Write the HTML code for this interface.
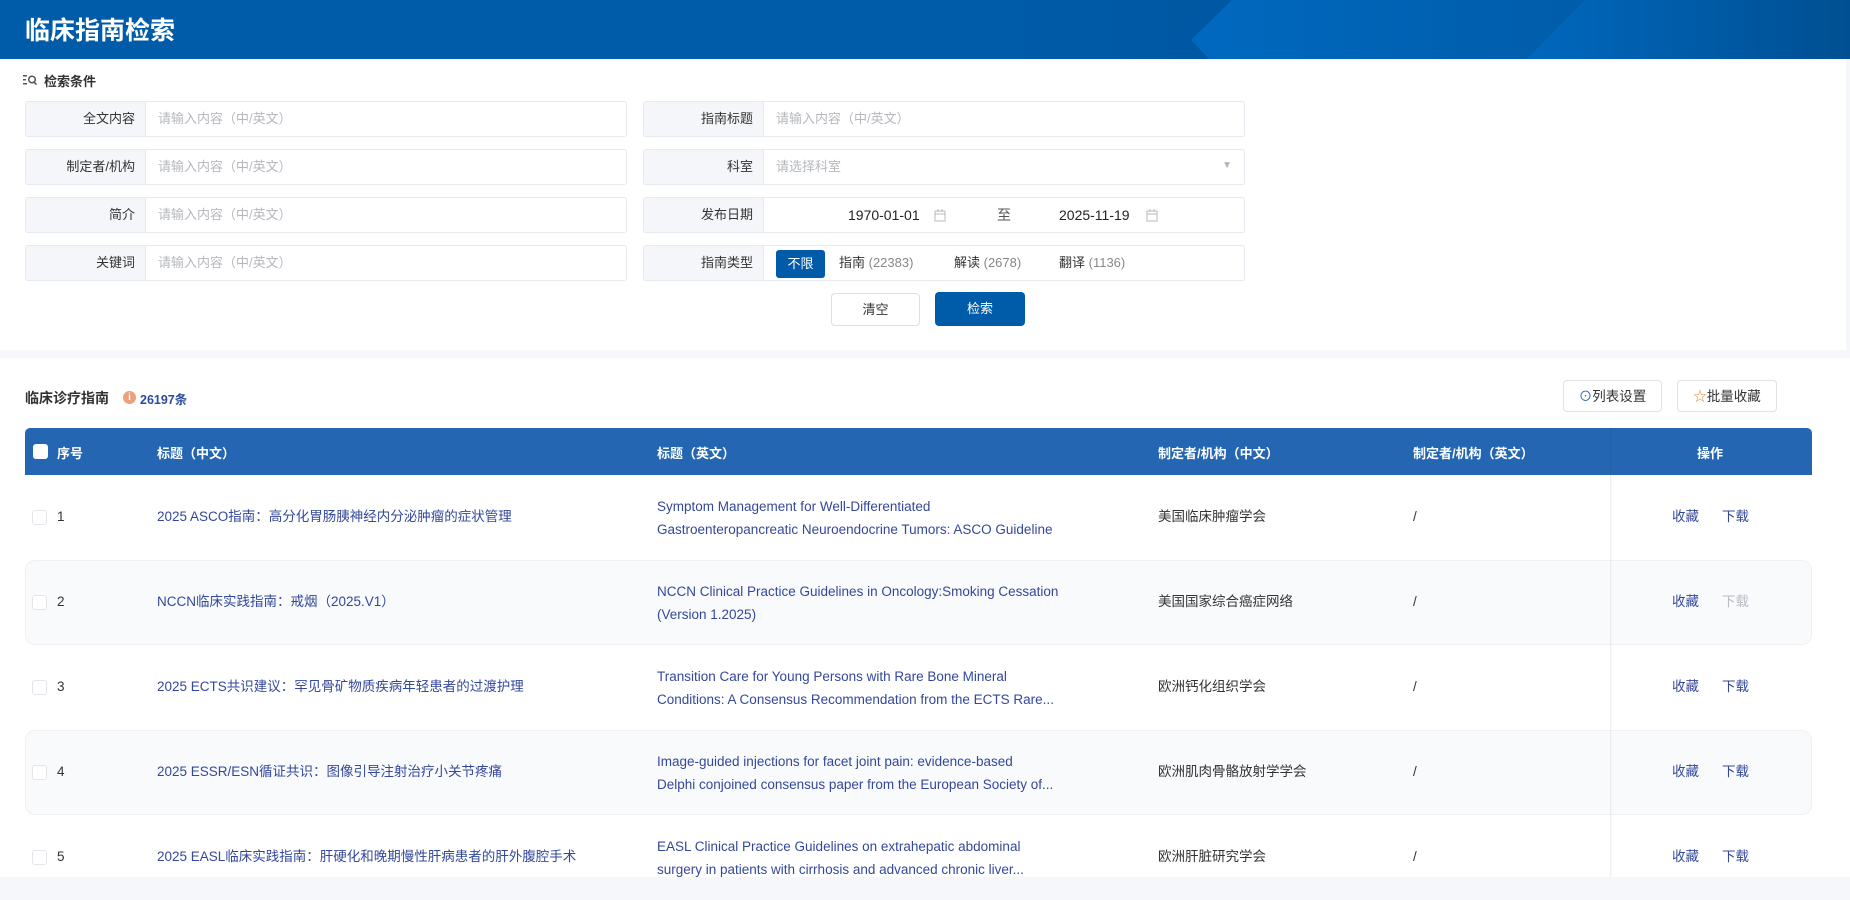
<!DOCTYPE html>
<html><head><meta charset="utf-8"><style>
*{box-sizing:border-box;margin:0;padding:0}
body{width:1850px;height:877px;overflow:hidden;background:#f5f7fb;font-family:"Liberation Sans","Noto Sans CJK SC",sans-serif;font-size:14px;color:#333;position:relative}
.hdr{position:absolute;left:0;top:0;width:1850px;height:59px;background:#005ba8;overflow:hidden}
.hdr h1{position:absolute;left:25px;top:11px;color:#fff;font-size:25px;font-weight:bold;z-index:2}
.panel{position:absolute;left:0;top:59px;width:1846px;height:291px;background:#fff}
.abs{position:absolute}
.box{position:absolute;height:36px;border:1px solid #e6e9ef;border-radius:3px;background:#fff}
.box .lab{position:absolute;left:0;top:0;bottom:0;width:120px;background:#f4f6f9;border-right:1px solid #e6e9ef;text-align:right;padding-right:10px;line-height:34px;color:#333;font-size:13px}
.box .ph{position:absolute;left:132px;line-height:34px;color:#b5b8be;font-size:13px}
.btn{position:absolute;height:33px;border-radius:4px;text-align:center;line-height:31px;font-size:13px}
.sec{position:absolute;left:0;top:358px;width:1850px;height:519px;background:#fff}
.th{position:absolute;left:25px;top:428px;width:1787px;height:47px;background:#2466b1;border-radius:5px 5px 0 0;color:#fff;font-weight:bold;font-size:13px}
.th span{position:absolute;top:15px}
.row{position:absolute;left:25px;width:1787px;height:85px;font-size:13.5px}
.row.g{background:#f9fafc;border:1px solid #eff1f4;border-radius:10px}
.row span{position:absolute;line-height:20px}
.row span.one{top:32px}
.lk{color:#34489b}
.cb{width:15px;height:15px;border:1px solid #e3e5ea;border-radius:3px;background:#fff}
</style></head><body>
<div class="hdr"><h1>临床指南检索</h1>
<svg class="abs" style="left:1000px;top:0" width="850" height="59"><defs>
<linearGradient id="a" x1="0" x2="1"><stop offset="0" stop-color="#0069bf"/><stop offset="1" stop-color="#00549b"/></linearGradient>
<linearGradient id="c" x1="0" x2="1"><stop offset="0" stop-color="#0068bd"/><stop offset="1" stop-color="#004f92"/></linearGradient>
<linearGradient id="b" x1="0" x2="1"><stop offset="0" stop-color="#005ba8"/><stop offset="1" stop-color="#004f90"/></linearGradient></defs>
<rect width="850" height="59" fill="url(#b)"/>
<polygon points="232,0 850,0 850,59 209,59 191,40" fill="url(#a)"/>
<polygon points="585,0 850,0 850,59 527,59" fill="url(#c)"/>
</svg></div>
<div class="panel"></div>
<svg class="abs" style="left:23px;top:74px" width="14" height="12"><g fill="#555"><rect x="0" y="1" width="4" height="1.5"/><rect x="0" y="5" width="3" height="1.5"/><rect x="0" y="9" width="4" height="1.5"/><circle cx="9" cy="5.5" r="3.3" fill="none" stroke="#555" stroke-width="1.5"/><rect x="11" y="8" width="1.6" height="3.5" transform="rotate(-45 11.5 9)"/></g></svg>
<div class="abs" style="left:44px;top:71px;font-size:13px;font-weight:bold;color:#333">检索条件</div>

<div class="box" style="left:25px;top:101px;width:602px"><div class="lab">全文内容</div><div class="ph">请输入内容（中/英文）</div></div>
<div class="box" style="left:25px;top:149px;width:602px"><div class="lab">制定者/机构</div><div class="ph">请输入内容（中/英文）</div></div>
<div class="box" style="left:25px;top:197px;width:602px"><div class="lab">简介</div><div class="ph">请输入内容（中/英文）</div></div>
<div class="box" style="left:25px;top:245px;width:602px"><div class="lab">关键词</div><div class="ph">请输入内容（中/英文）</div></div>
<div class="box" style="left:643px;top:101px;width:602px"><div class="lab">指南标题</div><div class="ph">请输入内容（中/英文）</div></div>
<div class="box" style="left:643px;top:149px;width:602px"><div class="lab">科室</div><div class="ph">请选择科室</div><span class="abs" style="right:12px;top:10px;color:#b0b3b8;font-size:10px">▼</span></div>
<div class="box" style="left:643px;top:197px;width:602px"><div class="lab">发布日期</div>
<span class="abs" style="left:204px;line-height:34px;color:#222">1970-01-01</span>
<svg class="abs" style="left:290px;top:11px" width="12" height="13"><rect x="1" y="2" width="10" height="10" fill="none" stroke="#bbb"/><line x1="1" y1="5" x2="11" y2="5" stroke="#bbb"/><line x1="4" y1="0" x2="4" y2="3" stroke="#bbb"/><line x1="8" y1="0" x2="8" y2="3" stroke="#bbb"/></svg>
<span class="abs" style="left:353px;line-height:34px;color:#555">至</span>
<span class="abs" style="left:415px;line-height:34px;color:#222">2025-11-19</span>
<svg class="abs" style="left:502px;top:11px" width="12" height="13"><rect x="1" y="2" width="10" height="10" fill="none" stroke="#bbb"/><line x1="1" y1="5" x2="11" y2="5" stroke="#bbb"/><line x1="4" y1="0" x2="4" y2="3" stroke="#bbb"/><line x1="8" y1="0" x2="8" y2="3" stroke="#bbb"/></svg></div>
<div class="box" style="left:643px;top:245px;width:602px"><div class="lab">指南类型</div>
<span class="abs" style="left:132px;top:4px;width:49px;height:28px;background:#005ba8;color:#fff;border-radius:3px;text-align:center;line-height:28px;font-size:13px">不限</span>
<span class="abs" style="left:195px;line-height:34px;font-size:13px">指南 <span style="color:#888">(22383)</span></span>
<span class="abs" style="left:310px;line-height:34px;font-size:13px">解读 <span style="color:#888">(2678)</span></span>
<span class="abs" style="left:415px;line-height:34px;font-size:13px">翻译 <span style="color:#888">(1136)</span></span></div>
<div class="btn" style="left:831px;top:293px;width:89px;border:1px solid #dcdfe6;color:#333;background:#fff">清空</div>
<div class="btn" style="left:935px;top:292px;width:90px;background:#005ba8;color:#fff;line-height:34px;height:34px">检索</div>

<div class="sec"></div>
<div class="abs" style="left:25px;top:388px;font-size:14px;font-weight:bold;color:#333">临床诊疗指南</div>
<span class="abs" style="left:123px;top:391px;width:13px;height:13px;border-radius:50%;background:#e9a27a;color:#fff;font-size:10px;text-align:center;line-height:13px;font-weight:bold">i</span>
<div class="abs" style="left:140px;top:389px;font-size:12.5px;font-weight:bold;color:#2b4a9b">26197条</div>
<div class="btn" style="left:1563px;top:380px;width:99px;height:32px;border:1px solid #dfe2e7;color:#333;font-size:13.5px"><span style="color:#2466b1">⊙</span>列表设置</div>
<div class="btn" style="left:1677px;top:380px;width:100px;height:32px;border:1px solid #dfe2e7;color:#333;font-size:13.5px"><span style="color:#f08a3c">☆</span>批量收藏</div>

<div class="th"><span class="cb" style="left:8px;top:16px;border:none"></span><span style="left:32px">序号</span><span style="left:132px">标题（中文）</span><span style="left:632px">标题（英文）</span><span style="left:1133px">制定者/机构（中文）</span><span style="left:1388px">制定者/机构（英文）</span><span style="left:1672px">操作</span></div>

<div class="row" style="top:475px"><span class="cb" style="left:7px;top:35px"></span><span class="one" style="left:32px">1</span><span class="lk one" style="left:132px">2025 ASCO指南：高分化胃肠胰神经内分泌肿瘤的症状管理</span><span class="lk" style="left:632px;top:20px;line-height:23px">Symptom Management for Well-Differentiated<br>Gastroenteropancreatic Neuroendocrine Tumors: ASCO Guideline</span><span class="one" style="left:1133px">美国临床肿瘤学会</span><span class="one" style="left:1388px">/</span><span class="lk one" style="left:1647px">收藏</span><span class="lk one" style="left:1697px">下载</span></div>
<div class="row g" style="top:560px"><span class="cb" style="left:6px;top:34px"></span><span class="one" style="left:31px;top:31px">2</span><span class="lk" style="left:131px;top:31px">NCCN临床实践指南：戒烟（2025.V1）</span><span class="lk" style="left:631px;top:19px;line-height:23px">NCCN Clinical Practice Guidelines in Oncology:Smoking Cessation<br>(Version 1.2025)</span><span style="left:1132px;top:31px">美国国家综合癌症网络</span><span style="left:1387px;top:31px">/</span><span class="lk" style="left:1646px;top:31px">收藏</span><span style="left:1696px;top:31px;color:#b8bcc4">下载</span></div>
<div class="row" style="top:645px"><span class="cb" style="left:7px;top:35px"></span><span class="one" style="left:32px">3</span><span class="lk one" style="left:132px">2025 ECTS共识建议：罕见骨矿物质疾病年轻患者的过渡护理</span><span class="lk" style="left:632px;top:20px;line-height:23px">Transition Care for Young Persons with Rare Bone Mineral<br>Conditions: A Consensus Recommendation from the ECTS Rare...</span><span class="one" style="left:1133px">欧洲钙化组织学会</span><span class="one" style="left:1388px">/</span><span class="lk one" style="left:1647px">收藏</span><span class="lk one" style="left:1697px">下载</span></div>
<div class="row g" style="top:730px"><span class="cb" style="left:6px;top:34px"></span><span style="left:31px;top:31px">4</span><span class="lk" style="left:131px;top:31px">2025 ESSR/ESN循证共识：图像引导注射治疗小关节疼痛</span><span class="lk" style="left:631px;top:19px;line-height:23px">Image-guided injections for facet joint pain: evidence-based<br>Delphi conjoined consensus paper from the European Society of...</span><span style="left:1132px;top:31px">欧洲肌肉骨骼放射学学会</span><span style="left:1387px;top:31px">/</span><span class="lk" style="left:1646px;top:31px">收藏</span><span class="lk" style="left:1696px;top:31px">下载</span></div>
<div class="row" style="top:815px"><span class="cb" style="left:7px;top:35px"></span><span class="one" style="left:32px">5</span><span class="lk one" style="left:132px">2025 EASL临床实践指南：肝硬化和晚期慢性肝病患者的肝外腹腔手术</span><span class="lk" style="left:632px;top:20px;line-height:23px">EASL Clinical Practice Guidelines on extrahepatic abdominal<br>surgery in patients with cirrhosis and advanced chronic liver...</span><span class="one" style="left:1133px">欧洲肝脏研究学会</span><span class="one" style="left:1388px">/</span><span class="lk one" style="left:1647px">收藏</span><span class="lk one" style="left:1697px">下载</span></div>
<div class="abs" style="left:1610px;top:428px;width:2px;height:449px;background:linear-gradient(90deg,rgba(0,0,0,.08),rgba(0,0,0,0))"></div>
</body></html>
